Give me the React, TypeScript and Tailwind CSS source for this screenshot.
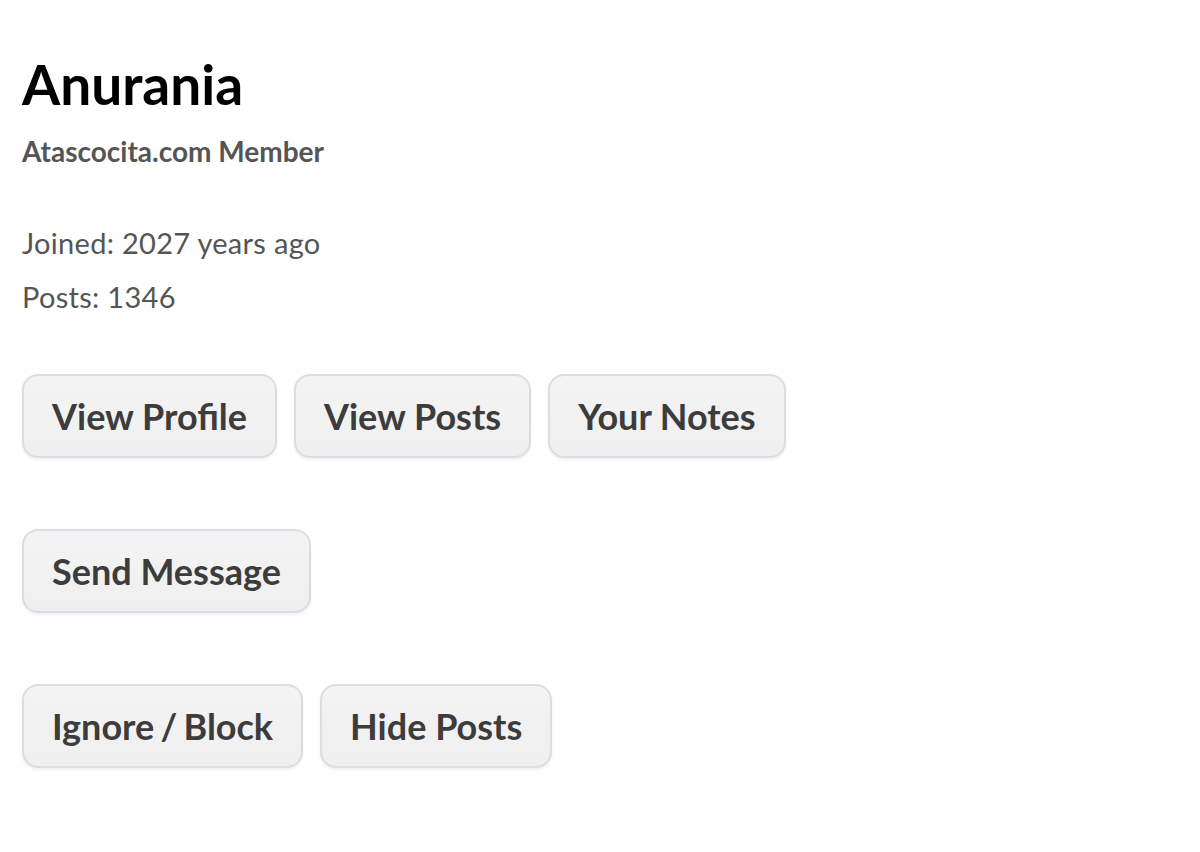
const font = { fontFamily: "Lato, 'Open Sans', sans-serif" };

function ActionButton({ label, tight }: { label: string; tight?: boolean }) {
  return (
    <button
      className={`h-[84px] px-[28px] rounded-[16px] border-2 border-[#dcdce2] bg-gradient-to-b from-[#f4f4f5] to-[#efeff0] text-[36px] font-bold text-[#3c3c3c] shadow-[0_2px_3px_rgba(0,0,0,0.06)] leading-none ${tight ? "[word-spacing:-2.5px]" : ""}`}
    >
      {label}
    </button>
  );
}

export default function App() {
  return (
    <div className="min-h-[852px] bg-white px-[22px] pt-[52px]" style={font}>
      <h1 className="text-[55px] font-bold text-black leading-[64px]">Anurania</h1>
      <p className="mt-[18px] text-[28px] font-bold text-[#555] leading-[34px]">Atascocita.com Member</p>

      <div className="mt-[48px] text-[29px] text-[#555] leading-[54px] tracking-[0.3px]">
        <p>Joined: 2027 years ago</p>
        <p>Posts: 1346</p>
      </div>

      <div className="mt-[50px] flex flex-col gap-[71px]">
        <div className="flex gap-[17px]">
          <ActionButton label="View Profile" />
          <ActionButton label="View Posts" />
          <ActionButton label="Your Notes" />
        </div>
        <div className="flex gap-[17px]">
          <ActionButton label="Send Message" />
        </div>
        <div className="flex gap-[17px]">
          <ActionButton label="Ignore / Block" tight />
          <ActionButton label="Hide Posts" />
        </div>
      </div>
    </div>
  );
}
